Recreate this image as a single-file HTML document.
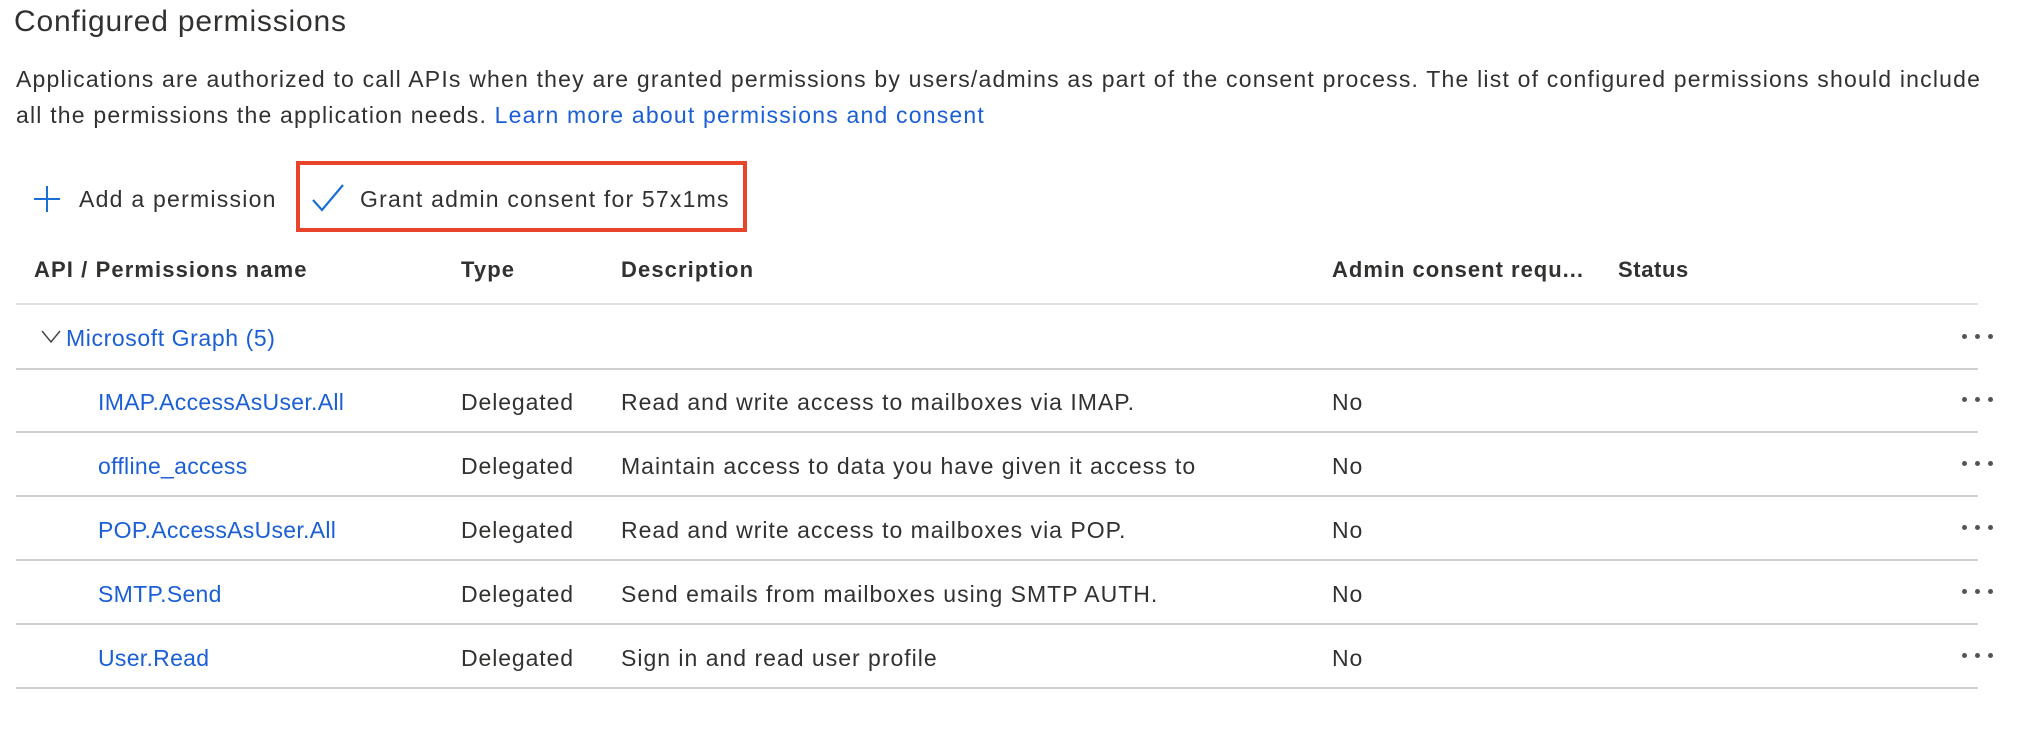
<!DOCTYPE html>
<html><head><meta charset="utf-8"><style>
*{margin:0;padding:0;box-sizing:border-box}
body{width:2044px;height:736px;background:#fff;font-family:"Liberation Sans",sans-serif;color:#323130;position:relative;overflow:hidden}
.a{position:absolute;white-space:nowrap}
.t{font-size:23px;line-height:26px;letter-spacing:0.9px}
.l{color:#1a5fd6;letter-spacing:0.3px}
.h{font-weight:bold;font-size:22px;line-height:26px;letter-spacing:1.1px}
.ln{position:absolute;left:16px;width:1962px;height:2px;background:#e1dfdd}
.dots{position:absolute;left:1962px;width:36px;height:6px}
.dots i{position:absolute;top:0;width:5px;height:5px;border-radius:50%;background:#555}
</style></head><body>
<div class="a" style="left:14px;top:5px;font-size:30px;line-height:34px;letter-spacing:0.8px">Configured permissions</div>
<div class="a t" style="left:16px;top:66px;letter-spacing:1.2px">Applications are authorized to call APIs when they are granted permissions by users/admins as part of the consent process. The list of configured permissions should include</div>
<div class="a t" style="left:16px;top:102px;letter-spacing:1.2px">all the permissions the application needs. <span style="color:#1a5fd6">Learn more about permissions and consent</span></div>

<svg class="a" style="left:33px;top:185px" width="28" height="28" viewBox="0 0 28 28"><path d="M14 1V27M1 14H27" stroke="#1a6fd4" stroke-width="2" fill="none"/></svg>
<div class="a t" style="left:79px;top:186px;letter-spacing:1.25px">Add a permission</div>
<div class="a" style="left:296px;top:161px;width:451px;height:71px;border:4px solid #e8442c"></div>
<svg class="a" style="left:311px;top:183px" width="34" height="30" viewBox="0 0 34 30"><path d="M2 17L11 27L32 2" stroke="#1a6fd4" stroke-width="2.2" fill="none"/></svg>
<div class="a t" style="left:360px;top:186px;letter-spacing:1.2px">Grant admin consent for 57x1ms</div>

<div class="a h" style="left:34px;top:257px">API / Permissions name</div>
<div class="a h" style="left:461px;top:257px">Type</div>
<div class="a h" style="left:621px;top:257px">Description</div>
<div class="a h" style="left:1332px;top:257px;letter-spacing:1px">Admin consent requ...</div>
<div class="a h" style="left:1618px;top:257px;letter-spacing:0.6px">Status</div>
<div class="ln" style="top:303px"></div>

<svg class="a" style="left:41px;top:330px" width="20" height="14" viewBox="0 0 20 14"><path d="M1 1L10 12L19 1" stroke="#444" stroke-width="1.5" fill="none"/></svg>
<div class="a t l" style="left:66px;top:325px;letter-spacing:0.6px">Microsoft Graph (5)</div>
<div class="dots" style="top:334px"><i style="left:0"></i><i style="left:13px"></i><i style="left:26px"></i></div>
<div class="ln" style="top:368px;background:#d2d0ce"></div>

<div class="a t l" style="left:98px;top:389px">IMAP.AccessAsUser.All</div>
<div class="a t" style="left:461px;top:389px">Delegated</div>
<div class="a t" style="left:621px;top:389px;letter-spacing:1px">Read and write access to mailboxes via IMAP.</div>
<div class="a t" style="left:1332px;top:389px">No</div>
<div class="dots" style="top:397px"><i style="left:0"></i><i style="left:13px"></i><i style="left:26px"></i></div>
<div class="ln" style="top:431px;background:#d2d0ce"></div>

<div class="a t l" style="left:98px;top:453px">offline_access</div>
<div class="a t" style="left:461px;top:453px">Delegated</div>
<div class="a t" style="left:621px;top:453px;letter-spacing:1px">Maintain access to data you have given it access to</div>
<div class="a t" style="left:1332px;top:453px">No</div>
<div class="dots" style="top:461px"><i style="left:0"></i><i style="left:13px"></i><i style="left:26px"></i></div>
<div class="ln" style="top:495px;background:#d2d0ce"></div>

<div class="a t l" style="left:98px;top:517px">POP.AccessAsUser.All</div>
<div class="a t" style="left:461px;top:517px">Delegated</div>
<div class="a t" style="left:621px;top:517px;letter-spacing:1px">Read and write access to mailboxes via POP.</div>
<div class="a t" style="left:1332px;top:517px">No</div>
<div class="dots" style="top:525px"><i style="left:0"></i><i style="left:13px"></i><i style="left:26px"></i></div>
<div class="ln" style="top:559px;background:#d2d0ce"></div>

<div class="a t l" style="left:98px;top:581px">SMTP.Send</div>
<div class="a t" style="left:461px;top:581px">Delegated</div>
<div class="a t" style="left:621px;top:581px;letter-spacing:1px">Send emails from mailboxes using SMTP AUTH.</div>
<div class="a t" style="left:1332px;top:581px">No</div>
<div class="dots" style="top:589px"><i style="left:0"></i><i style="left:13px"></i><i style="left:26px"></i></div>
<div class="ln" style="top:623px;background:#d2d0ce"></div>

<div class="a t l" style="left:98px;top:645px">User.Read</div>
<div class="a t" style="left:461px;top:645px">Delegated</div>
<div class="a t" style="left:621px;top:645px;letter-spacing:1px">Sign in and read user profile</div>
<div class="a t" style="left:1332px;top:645px">No</div>
<div class="dots" style="top:653px"><i style="left:0"></i><i style="left:13px"></i><i style="left:26px"></i></div>
<div class="ln" style="top:687px;background:#d2d0ce"></div>
</body></html>
